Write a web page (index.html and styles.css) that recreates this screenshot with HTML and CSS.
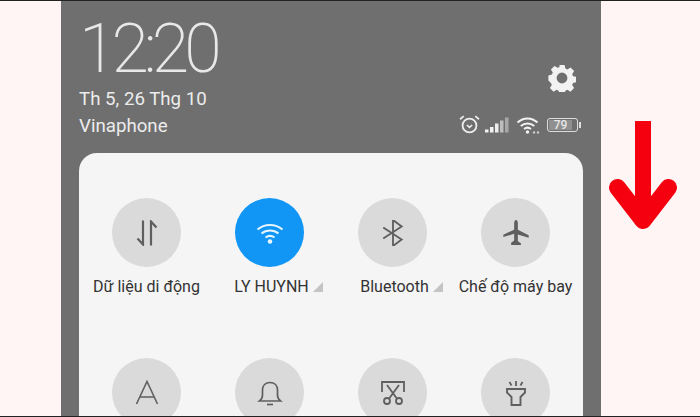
FILE: index.html
```html
<!DOCTYPE html>
<html lang="en">
<head>
<meta charset="UTF-8" />
<title>Control centre</title>
<link rel="stylesheet" href="styles.css">
</head>
<body>

  <div class="frame">
    <div class="phone">

      <div class="status">
        <div class="status-left">
          <div class="clock">12:20</div>
          <div class="date">Th 5, 26 Thg 10</div>
          <div class="carrier">Vinaphone</div>
        </div>
        <div class="status-right">
          <svg class="gear" viewBox="0 0 28 28">
            <path fill="#f2f2f2" fill-rule="evenodd" d="M11.4 1h5.2l.8 3.5 2 .9 3.1-1.900 3.600 3.600-1.900 3.100.9 2 3.500.8v5.200l-3.500.8-.9 2 1.900 3.100-3.600 3.600-3.100-1.900-2 .9-.8 3.300h-5.200l-.8-3.300-2-.9-3.100 1.900-3.600-3.600 1.900-3.100-.9-2L.4 16.600v-5.200l3.500-.8.9-2-1.900-3.100 3.600-3.600 3.100 1.900 2-.9zM14 8.600a5.400 5.400 0 1 0 0 10.800 5.400 5.400 0 0 0 0-10.800z"/>
          </svg>
          <div class="indicators">
            <svg class="ind-alarm" viewBox="0 0 20 20">
              <circle cx="10" cy="11" r="6.600" fill="none" stroke="#eee" stroke-width="1.700"/>
              <path d="M7.500 10.500l2.500 2.200 2.500-2.200" fill="none" stroke="#eee" stroke-width="1.500"/>
              <path d="M1 5l3.500-3M19 5l-3.500-3" fill="none" stroke="#eee" stroke-width="1.600"/>
            </svg>
            <svg class="ind-signal" viewBox="0 0 24 16">
              <rect x="0" y="12.500" width="3.500" height="3" fill="#f2f2f2"/>
              <rect x="5" y="10" width="3.500" height="5.500" fill="#f2f2f2"/>
              <rect x="10" y="6.500" width="3.500" height="9" fill="#eee"/>
              <rect x="15" y="3.500" width="3.500" height="12" fill="#bdbdbd"/>
              <rect x="20" y="0.500" width="3.500" height="15" fill="#a8a8a8"/>
            </svg>
            <svg class="ind-wifi" viewBox="0 0 24 18">
              <path d="M1.500 6.500C7.500 1 15.500 1 21.500 6.500M4.800 10c4-3.500 9.500-3.500 13.500 0M8 13c2.200-1.700 4.800-1.700 7 0" fill="none" stroke="#f2f2f2" stroke-width="2"/>
              <circle cx="11.500" cy="16" r="1.700" fill="#f2f2f2"/>
              <circle cx="18" cy="16.500" r="1.200" fill="#ccc"/>
              <circle cx="22" cy="16.500" r="1.200" fill="#ccc"/>
            </svg>
            <div class="battery">
              <div class="battery-body"><span class="battery-level">79</span></div>
              <div class="battery-tip"></div>
            </div>
          </div>
        </div>
      </div>

      <div class="panel">
        <div class="tile">
          <div class="tile-icon">
            <svg class="icon" viewBox="0 0 26 26">
              <path d="M9 .5v24L3.500 18.500M17 25.500v-24l5.500 6" fill="none" stroke="#5f5f5f" stroke-width="2.200"/>
            </svg>
          </div>
          <div class="tile-label">Dữ liệu di động</div>
        </div>
        <div class="tile">
          <div class="tile-icon tile-icon-on">
            <svg class="icon-wifi" viewBox="0 0 28 24">
              <path d="M1.500 8.500C8.500 2.500 19.500 2.500 26.500 8.500M5.500 12.500c5-4 12-4 17 0M9.500 16.500c2.800-2 6.200-2 9 0" fill="none" stroke="#e8f5ff" stroke-width="2"/>
              <circle cx="14" cy="20.500" r="2.300" fill="#e8f5ff"/>
            </svg>
          </div>
          <div class="tile-label">LY HUYNH<span class="more"></span></div>
        </div>
        <div class="tile">
          <div class="tile-icon">
            <svg class="icon" viewBox="0 0 24 24">
              <path d="M3 7l17 11-8 6V0l8 6L3 17" fill="none" stroke="#5f5f5f" stroke-width="1.700"/>
            </svg>
          </div>
          <div class="tile-label">Bluetooth<span class="more"></span></div>
        </div>
        <div class="tile">
          <div class="tile-icon">
            <svg class="icon" viewBox="0 0 24 24">
              <path fill="#5f5f5f" d="M12 0c1.100 0 1.700 1.500 1.700 3v6l10 5v2.300l-10-3v6.200l2.800 2v1.500H7.500V21l2.800-2v-6.200l-10 3V13.500l10-4.500V3C10.300 1.500 10.900 0 12 0z"/>
            </svg>
          </div>
          <div class="tile-label">Chế độ máy bay</div>
        </div>
        <div class="tile">
          <div class="tile-icon">
            <svg class="icon" viewBox="0 0 26 26">
              <path d="M2.500 24L13 1.500 23.500 24M6 17h14" fill="none" stroke="#5f5f5f" stroke-width="1.600"/>
            </svg>
          </div>
        </div>
        <div class="tile">
          <div class="tile-icon">
            <svg class="icon" viewBox="0 0 26 26">
              <path d="M2.500 21c2-1.500 3-3 3-6v-5c0-4.500 3-7.500 7.500-7.500s7.500 3 7.500 7.500v5c0 3 1 4.500 3 6z" fill="none" stroke="#5f5f5f" stroke-width="1.700"/>
              <path d="M10 24.500h6" stroke="#5f5f5f" stroke-width="1.700"/>
            </svg>
          </div>
        </div>
        <div class="tile">
          <div class="tile-icon">
            <svg class="icon" viewBox="0 0 26 26">
              <path d="M2 12V2h22v10" fill="none" stroke="#5f5f5f" stroke-width="1.800"/>
              <path d="M7 5l9.500 13M19 5L9.500 18" fill="none" stroke="#5f5f5f" stroke-width="1.800"/>
              <circle cx="7" cy="21" r="3" fill="none" stroke="#5f5f5f" stroke-width="1.800"/>
              <circle cx="19" cy="21" r="3" fill="none" stroke="#5f5f5f" stroke-width="1.800"/>
            </svg>
          </div>
        </div>
        <div class="tile">
          <div class="tile-icon">
            <svg class="icon" viewBox="0 0 26 26">
              <path d="M4 9h18v3.500l-4.500 4.500v8h-9v-8L4 12.500z" fill="none" stroke="#5f5f5f" stroke-width="1.900"/>
              <path d="M13 1v5M6.500 2l2 3.500M19.500 2l-2 3.500" fill="none" stroke="#5f5f5f" stroke-width="1.800"/>
            </svg>
          </div>
        </div>
      </div>

    </div>

    <svg class="arrow" viewBox="0 0 68 110">
      <rect x="26" y="0" width="16" height="95" fill="#f5000f"/>
      <path d="M8.500 66.500L34 99.500l25.500-33" fill="none" stroke="#f5000f" stroke-width="17" stroke-linecap="round" stroke-linejoin="round"/>
    </svg>
  </div>

</body>
</html>
```

FILE: styles.css
```css
html, body {
  margin: 0;
  height: 100%;
}
body {
  font-family: Roboto, "Liberation Sans", sans-serif;
  background: #fff5f5;
  overflow: hidden;
}
.frame {
  width: 700px;
  height: 417px;
  box-sizing: border-box;
  border-top: 1px solid #222;
  border-bottom: 1px solid #222;
  display: flex;
  align-items: flex-start;
}
.phone {
  width: 540px;
  height: 415px;
  margin-left: 61px;
  background: #6f6f6f;
  overflow: hidden;
}
.status {
  height: 152px;
  padding: 0 20px 0 18px;
  display: flex;
  justify-content: space-between;
}
.clock {
  margin-top: 8px;
  font-size: 68px;
  font-weight: 200;
  letter-spacing: -5px;
  line-height: 80px;
  color: #e8e8e8;
}
.date {
  margin-top: -2px;
  font-size: 18.700px;
  line-height: 24px;
  color: #ececec;
}
.carrier {
  margin-top: 3px;
  font-size: 18.700px;
  line-height: 24px;
  color: #ececec;
}
.status-right {
  display: flex;
  flex-direction: column;
  align-items: flex-end;
}
.gear {
  width: 28px;
  height: 28px;
  margin-top: 63px;
  margin-right: 5px;
}
.indicators {
  margin-top: 22px;
  display: flex;
  align-items: center;
  gap: 7px;
}
.ind-alarm {
  width: 21px;
  height: 21px;
  margin-right: -2px;
}
.ind-signal {
  width: 24px;
  height: 16px;
}
.ind-wifi {
  width: 24px;
  height: 18px;
}
.battery {
  display: flex;
  align-items: center;
}
.battery-body {
  width: 29px;
  height: 12px;
  border: 1.500px solid #ddd;
  border-radius: 3px;
  display: flex;
}
.battery-level {
  width: 23px;
  margin: 1px;
  background: #8f8f8f;
  color: #e6e6e6;
  font-size: 12px;
  font-weight: 500;
  line-height: 10px;
  text-align: center;
}
.battery-tip {
  width: 2px;
  height: 6px;
  margin-left: 1px;
  background: #ddd;
}
.panel {
  width: 504px;
  margin-left: 18px;
  height: 300px;
  padding-top: 45px;
  box-sizing: border-box;
  background: #f5f5f5;
  border-radius: 18px 18px 0 0;
  display: grid;
  grid-template-columns: repeat(4, 123px);
  justify-content: center;
  grid-auto-rows: 160px;
}
.tile {
  display: flex;
  flex-direction: column;
  align-items: center;
}
.tile-icon {
  width: 69px;
  height: 69px;
  border-radius: 50%;
  background: #dadada;
  display: flex;
  align-items: center;
  justify-content: center;
  flex: none;
}
.tile-icon-on {
  background: #1196f5;
}
.icon {
  width: 26px;
  height: 26px;
}
.icon-wifi {
  width: 28px;
  height: 24px;
}
.tile-label {
  margin-top: 10px;
  font-size: 16px;
  line-height: 20px;
  color: #333;
  white-space: nowrap;
}
/* triangle hangs past the label so the text stays centred under the circle */
.more {
  display: inline-block;
  width: 0;
  height: 0;
  margin-left: 4px;
  margin-right: -18px;
  border-left: 10px solid transparent;
  border-bottom: 10px solid #c4c4c4;
}
.arrow {
  width: 68px;
  height: 110px;
  margin-top: 120px;
  margin-left: 8px;
}
```
